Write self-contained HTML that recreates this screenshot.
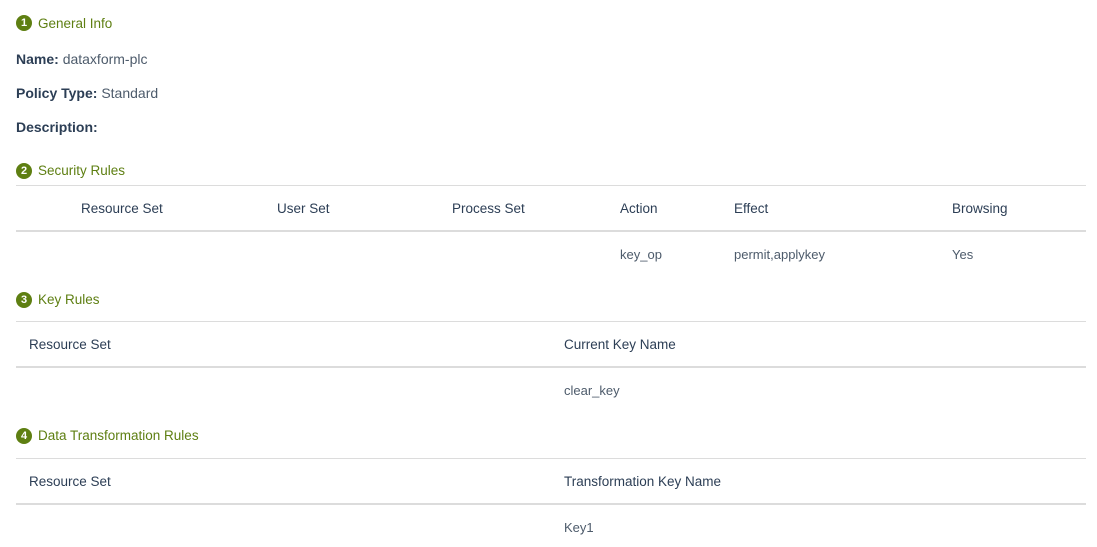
<!DOCTYPE html>
<html><head><style>
body{margin:0;width:1097px;height:547px;background:#fff;font-family:"Liberation Sans",sans-serif;font-size:13.5px;color:#2c3e55;position:relative;overflow:hidden}
.a{position:absolute;white-space:nowrap;line-height:16px}
.h{color:#5e7f12;font-size:13.5px}
.n{position:absolute;width:16px;height:16px;border-radius:50%;background:#5e7f12;color:#fff;font-size:11px;font-weight:bold;text-align:center;line-height:16px}
.l1{position:absolute;left:16px;width:1070px;height:1px;background:#dcdcdc}
.l2{position:absolute;left:16px;width:1070px;height:2px;background:#dcdcdc}
.r{color:#4d5b6b;font-size:13px}
b{font-weight:600}
</style></head><body>
<div class="n" style="left:16px;top:15px">1</div><div class="a h" style="left:38px;top:16px">General Info</div>
<div class="a" style="left:16px;top:51px;font-size:14px"><b>Name:</b> <span style="color:#4d5b6b">dataxform-plc</span></div>
<div class="a" style="left:16px;top:85px;font-size:14px"><b>Policy Type:</b> <span style="color:#4d5b6b">Standard</span></div>
<div class="a" style="left:16px;top:119px;font-size:14px"><b>Description:</b></div>

<div class="n" style="left:16px;top:163px">2</div><div class="a h" style="left:38px;top:163px">Security Rules</div>
<div class="l1" style="top:185px"></div>
<div class="a" style="left:81px;top:201px">Resource Set</div>
<div class="a" style="left:277px;top:201px">User Set</div>
<div class="a" style="left:452px;top:201px">Process Set</div>
<div class="a" style="left:620px;top:201px">Action</div>
<div class="a" style="left:734px;top:201px">Effect</div>
<div class="a" style="left:952px;top:201px">Browsing</div>
<div class="l2" style="top:230px"></div>
<div class="a r" style="left:620px;top:247px">key_op</div>
<div class="a r" style="left:734px;top:247px">permit,applykey</div>
<div class="a r" style="left:952px;top:247px">Yes</div>

<div class="n" style="left:16px;top:292px">3</div><div class="a h" style="left:38px;top:292px">Key Rules</div>
<div class="l1" style="top:321px"></div>
<div class="a" style="left:29px;top:337px">Resource Set</div>
<div class="a" style="left:564px;top:337px">Current Key Name</div>
<div class="l2" style="top:366px"></div>
<div class="a r" style="left:564px;top:383px">clear_key</div>

<div class="n" style="left:16px;top:428px">4</div><div class="a h" style="left:38px;top:428px">Data Transformation Rules</div>
<div class="l1" style="top:458px"></div>
<div class="a" style="left:29px;top:474px">Resource Set</div>
<div class="a" style="left:564px;top:474px">Transformation Key Name</div>
<div class="l2" style="top:503px"></div>
<div class="a r" style="left:564px;top:520px">Key1</div>
</body></html>
